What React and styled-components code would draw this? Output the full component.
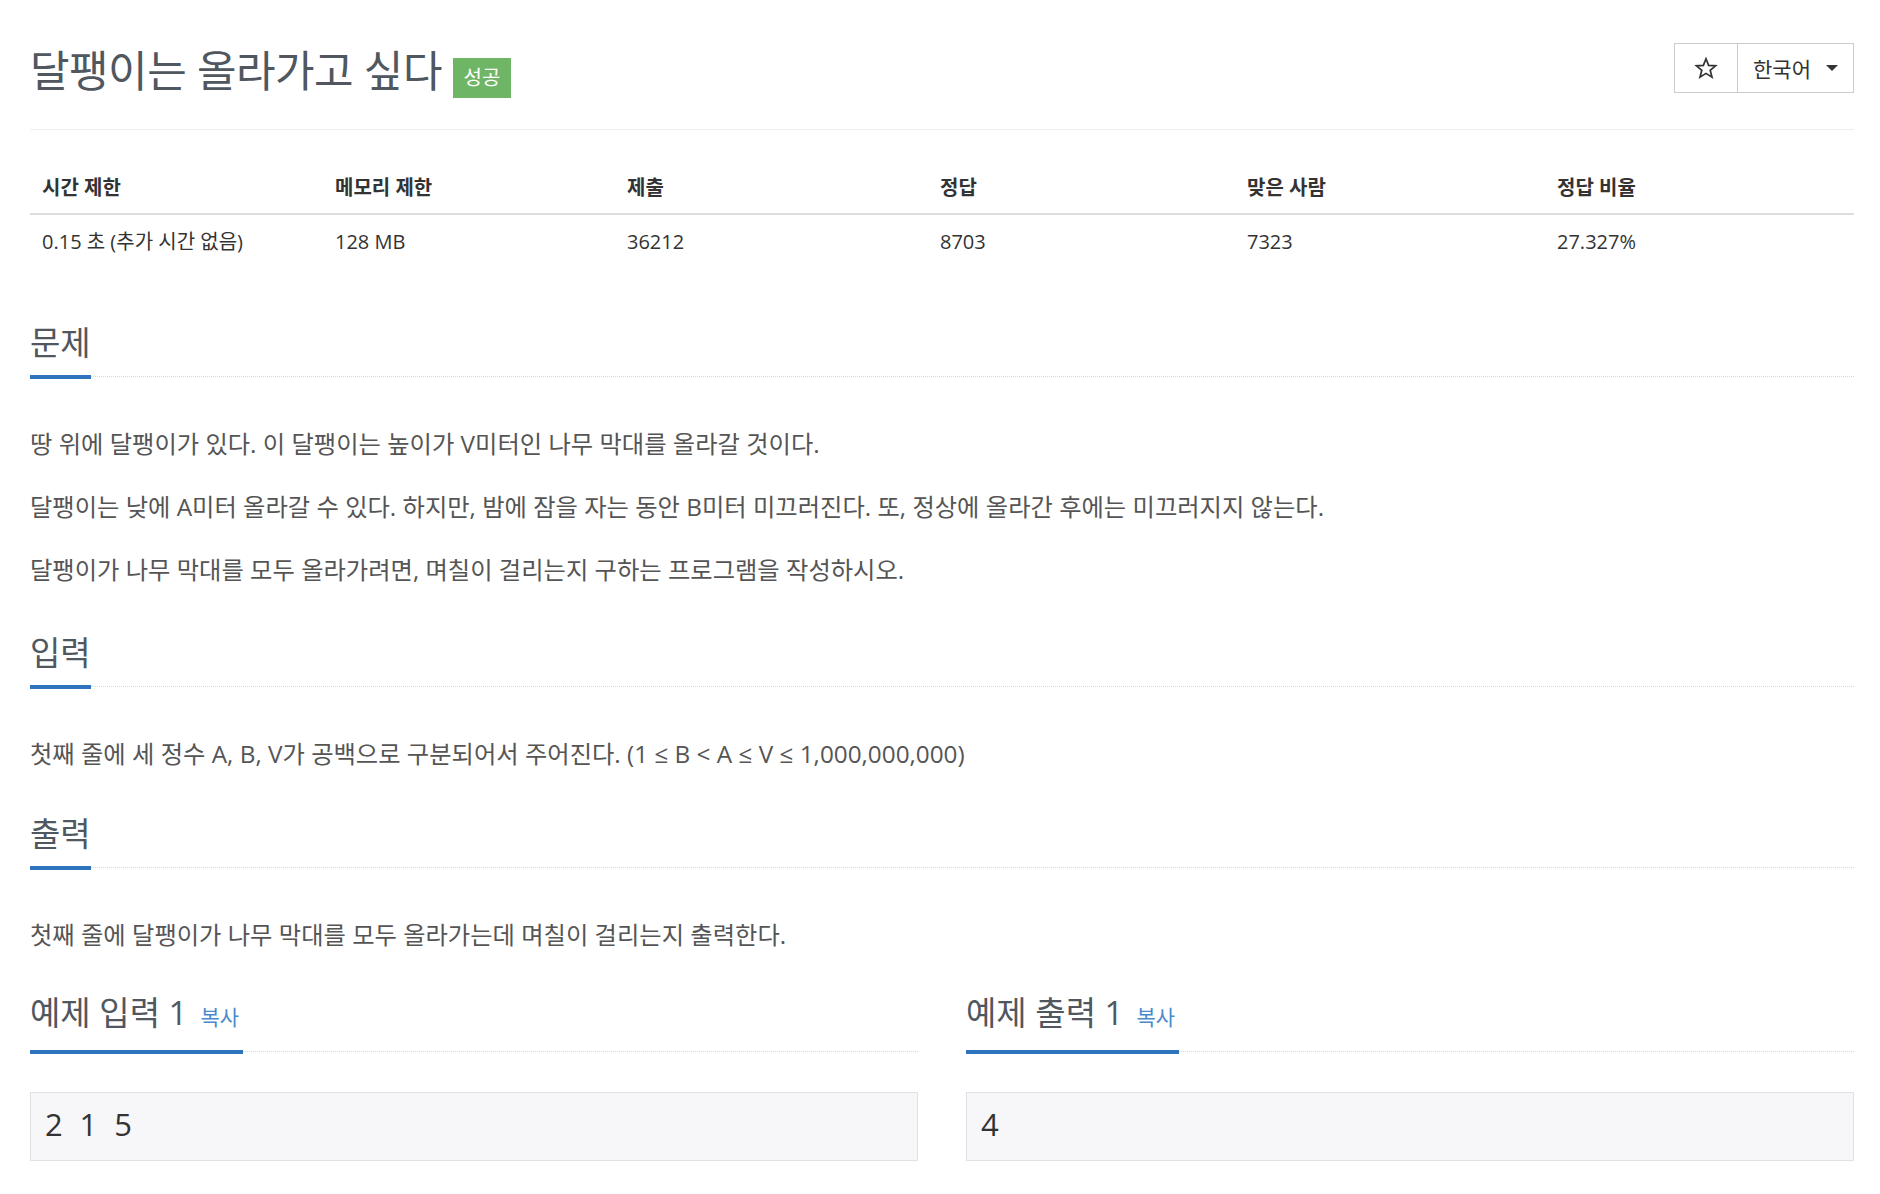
import React from "react"
import styled, { createGlobalStyle } from "styled-components"

const GlobalStyle = createGlobalStyle`
	html, body {
		margin: 0;
		padding: 0;
		background: #fff;
	}
	body {
		font-family: "Open Sans", "Noto Sans CJK KR", sans-serif;
		color: #333;
	}
`

const COLOR_HEADING = "#50575f"
const COLOR_BLUE = "#2e73be"

const Page = styled.div`
	display: flex;
	flex-direction: column;
	padding: 0 26px 30px 30px;
`

const Header = styled.header`
	display: flex;
	justify-content: space-between;
	align-items: flex-start;
	padding: 43px 0 31px;
	border-bottom: 1px solid #eee;
`

const Title = styled.h1`
	display: flex;
	align-items: flex-start;
	gap: 11px;
	margin: 4px 0 0;
	font-size: 43px;
	line-height: 47px;
	font-weight: 400;
	letter-spacing: -0.5px;
	color: ${COLOR_HEADING};
`

const Badge = styled.span`
	display: inline-flex;
	align-items: center;
	justify-content: center;
	margin-top: 11px;
	width: 58px;
	height: 40px;
	background: #6fb566;
	color: #fff;
	font-size: 20px;
	letter-spacing: 0;
	line-height: 1;
`

const ButtonGroup = styled.div`
	display: flex;
	border: 1px solid #ccc;
`

const GroupButton = styled.button`
	display: flex;
	align-items: center;
	height: 48px;
	padding: 0 ${(props) => (props.wide ? "15px" : "0")};
	width: ${(props) => (props.wide ? "116px" : "62px")};
	justify-content: ${(props) => (props.wide ? "space-between" : "center")};
	border: 0;
	border-left: ${(props) => (props.wide ? "1px solid #ccc" : "0")};
	background: #fff;
	color: #333;
	font-family: inherit;
	font-size: 21px;
	cursor: pointer;
`

const Caret = styled.span`
	width: 0;
	height: 0;
	border-top: 6px solid #333;
	border-left: 6px solid transparent;
	border-right: 6px solid transparent;
`

const StarIcon = () => (
	<svg width="24" height="24" viewBox="0 0 24 24" aria-hidden="true">
		<path
			d="M12 2.8l2.6 6.6 7 .4-5.4 4.5 1.8 6.9L12 17.4l-6 3.8 1.8-6.9-5.4-4.5 7-.4z"
			fill="none"
			stroke="#333"
			strokeWidth="1.7"
			strokeLinejoin="miter"
		/>
	</svg>
)

const InfoTable = styled.table`
	width: 100%;
	margin-top: 33px;
	border-collapse: collapse;
	table-layout: fixed;
	font-size: 20px;
	color: #333;

	th {
		text-align: left;
		font-weight: 700;
		padding: 10px 12px;
		line-height: 30px;
		border-bottom: 2px solid #ddd;
	}

	td {
		padding: 12px 12px 10px;
		line-height: 30px;
	}
`

const Section = styled.section`
	display: flex;
	flex-direction: column;
	margin-top: ${(props) => props.gap ?? 46}px;
	min-width: 0;
`

const Headline = styled.div`
	border-bottom: 1px dotted #d8d8d8;
	margin-bottom: ${(props) => props.space ?? 49}px;
`

const HeadlineTitle = styled.h2`
	display: inline-block;
	margin: 0 0 -3px;
	padding-bottom: 14px;
	border-bottom: 4px solid ${COLOR_BLUE};
	font-size: 33px;
	line-height: 37px;
	font-weight: 400;
	color: ${COLOR_HEADING};
`

const CopyLink = styled.a`
	margin-left: 13px;
	padding-right: 4px;
	font-size: 21px;
	color: #4a8acb;
	text-decoration: none;
	cursor: pointer;
`

const ProblemText = styled.div`
	display: flex;
	flex-direction: column;
	gap: 27px;
	font-size: 24.3px;
	line-height: 36px;
	color: #555;

	p {
		margin: 0;
	}
`

const SampleRow = styled.div`
	display: grid;
	grid-template-columns: 1fr 1fr;
	column-gap: 48px;
	margin-top: 41px;

	${Section} {
		margin-top: 0;
	}
`

const SampleData = styled.pre`
	margin: 0;
	padding: 0 14px 5px;
	background: #f7f7f9;
	border: 1px solid #e1e1e8;
	font-family: "Open Sans", sans-serif;
	font-size: 31px;
	line-height: 62px;
	letter-spacing: 4.4px;
	color: #333;
`

const info = [
	["시간 제한", "0.15 초 (추가 시간 없음)", 293],
	["메모리 제한", "128 MB", 292],
	["제출", "36212", 313],
	["정답", "8703", 307],
	["맞은 사람", "7323", 310],
	["정답 비율", "27.327%", 309],
]

const Sample = ({ title, data }) => (
	<Section>
		<Headline space={40}>
			<HeadlineTitle>
				{title}
				<CopyLink>복사</CopyLink>
			</HeadlineTitle>
		</Headline>
		<SampleData>{data}</SampleData>
	</Section>
)

const Block = ({ title, gap, children }) => (
	<Section gap={gap}>
		<Headline>
			<HeadlineTitle>{title}</HeadlineTitle>
		</Headline>
		<ProblemText>{children}</ProblemText>
	</Section>
)

export default function App() {
	return (
		<Page>
			<GlobalStyle />
			<Header>
				<Title>
					달팽이는 올라가고 싶다
					<Badge>성공</Badge>
				</Title>
				<ButtonGroup>
					<GroupButton>
						<StarIcon />
					</GroupButton>
					<GroupButton wide>
						한국어
						<Caret />
					</GroupButton>
				</ButtonGroup>
			</Header>

			<InfoTable>
				<colgroup>
					{info.map(([label, , width]) => (
						<col key={label} style={{ width }} />
					))}
				</colgroup>
				<thead>
					<tr>
						{info.map(([label]) => (
							<th key={label}>{label}</th>
						))}
					</tr>
				</thead>
				<tbody>
					<tr>
						{info.map(([label, value]) => (
							<td key={label}>{value}</td>
						))}
					</tr>
				</tbody>
			</InfoTable>

			<Block title="문제" gap={57}>
				<p>땅 위에 달팽이가 있다. 이 달팽이는 높이가 V미터인 나무 막대를 올라갈 것이다.</p>
				<p>
					달팽이는 낮에 A미터 올라갈 수 있다. 하지만, 밤에 잠을 자는 동안 B미터 미끄러진다. 또,
					정상에 올라간 후에는 미끄러지지 않는다.
				</p>
				<p>달팽이가 나무 막대를 모두 올라가려면, 며칠이 걸리는지 구하는 프로그램을 작성하시오.</p>
			</Block>

			<Block title="입력">
				<p>첫째 줄에 세 정수 A, B, V가 공백으로 구분되어서 주어진다. (1 ≤ B &lt; A ≤ V ≤ 1,000,000,000)</p>
			</Block>

			<Block title="출력" gap={43}>
				<p>첫째 줄에 달팽이가 나무 막대를 모두 올라가는데 며칠이 걸리는지 출력한다.</p>
			</Block>

			<SampleRow>
				<Sample title="예제 입력 1" data="2 1 5" />
				<Sample title="예제 출력 1" data="4" />
			</SampleRow>
		</Page>
	)
}
